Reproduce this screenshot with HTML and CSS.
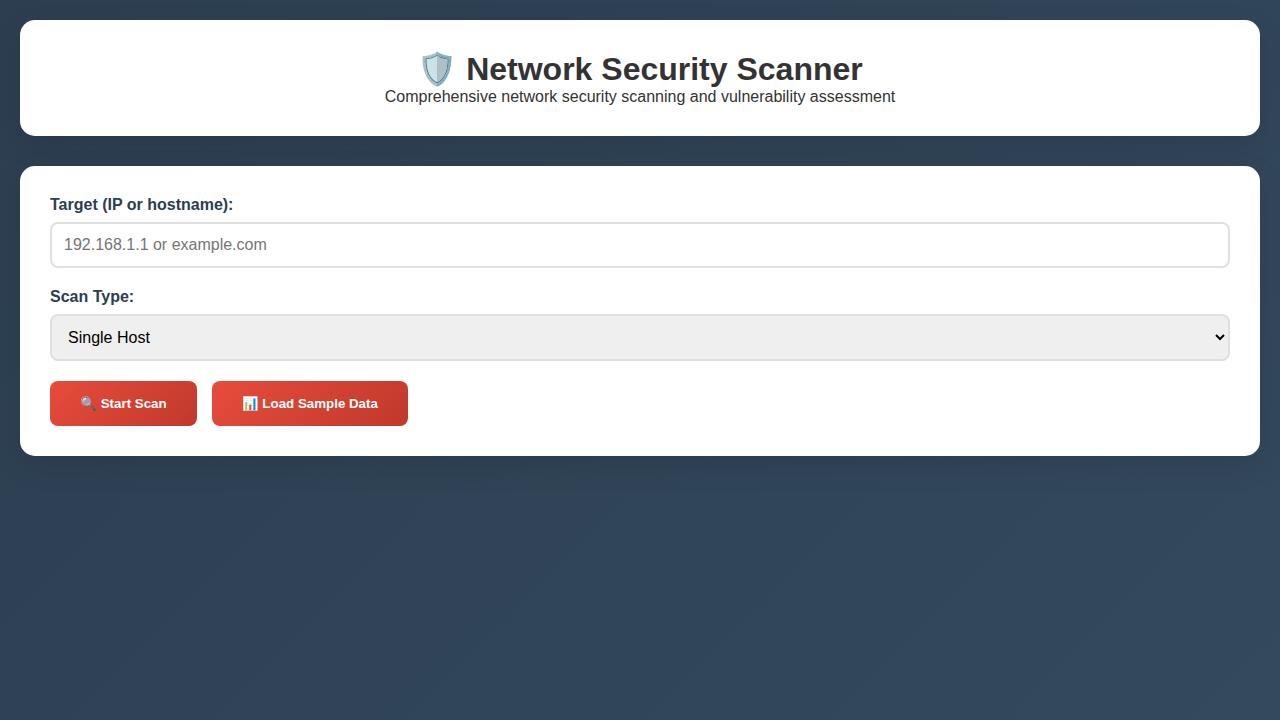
FILE: index.html
```html
<!DOCTYPE html>
<html lang="en">
<head>
<meta charset="UTF-8">
<meta name="viewport" content="width=device-width, initial-scale=1.0">
<title>Network Security Scanner</title>
<link rel="stylesheet" href="styles.css">
</head>
<body>
<main class="container">
  <header class="header">
    <h1>🛡️ Network Security Scanner</h1>
    <p>Comprehensive network security scanning and vulnerability assessment</p>
  </header>
  <form class="scan-form">
    <div class="form-group">
      <label for="target">Target (IP or hostname):</label>
      <input type="text" id="target" placeholder="192.168.1.1 or example.com">
    </div>
    <div class="form-group">
      <label for="scanType">Scan Type:</label>
      <select id="scanType">
        <option>Single Host</option>
      </select>
    </div>
    <div class="actions">
      <button type="button" class="btn">🔍 Start Scan</button>
      <button type="button" class="btn">📊 Load Sample Data</button>
    </div>
  </form>
</main>
</body>
</html>
```

FILE: styles.css
```css
* {
  margin: 0;
  padding: 0;
  box-sizing: border-box;
}

body {
  font-family: Arial, "Liberation Sans", sans-serif;
  background: linear-gradient(135deg, #2c3e50 0%, #34495e 100%);
  min-height: 100vh;
  color: #333;
}

.container {
  max-width: 1400px;
  margin: 0 auto;
  padding: 20px;
}

.header,
.scan-form {
  background: #fff;
  border-radius: 15px;
  padding: 30px;
  margin-bottom: 30px;
  box-shadow: 0 10px 30px rgba(0, 0, 0, 0.1);
}

.header {
  text-align: center;
}

.form-group {
  margin-bottom: 20px;
}

.form-group label {
  display: block;
  margin-bottom: 8px;
  font-weight: 600;
  color: #2c3e50;
}

.form-group input,
.form-group select {
  width: 100%;
  padding: 12px;
  border: 2px solid #e0e0e0;
  border-radius: 8px;
  font-family: inherit;
  font-size: 16px;
}

.actions {
  display: flex;
  flex-wrap: wrap;
  gap: 15px;
}

.btn {
  background: linear-gradient(135deg, #e74c3c, #c0392b);
  color: #fff;
  border: none;
  padding: 15px 30px;
  border-radius: 8px;
  font-weight: 600;
  cursor: pointer;
}
```
